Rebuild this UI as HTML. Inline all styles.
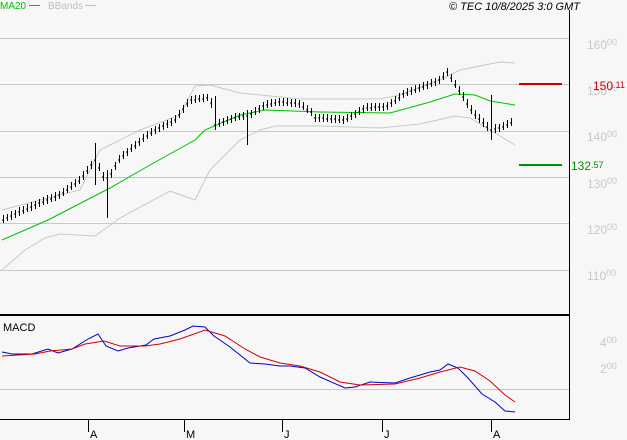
<!DOCTYPE html>
<html><head><meta charset="utf-8"><style>
html,body{margin:0;padding:0;background:#f7f7f7;}
body{width:627px;height:440px;overflow:hidden;position:relative;font-family:"Liberation Sans",sans-serif;}
svg{position:absolute;left:0;top:0;}
</style></head><body>
<svg width="627" height="440" xmlns="http://www.w3.org/2000/svg" font-family="Liberation Sans, sans-serif">
<g stroke="#c8c8c8" stroke-width="1">
<line x1="0" y1="38.5" x2="569" y2="38.5"/>
<line x1="0" y1="84.5" x2="569" y2="84.5"/>
<line x1="0" y1="131.5" x2="569" y2="131.5"/>
<line x1="0" y1="177.5" x2="569" y2="177.5"/>
<line x1="0" y1="223.5" x2="569" y2="223.5"/>
<line x1="0" y1="270.5" x2="569" y2="270.5"/>
<line x1="0" y1="389.5" x2="569" y2="389.5"/>
</g>
<g fill="#c8c8c8" font-size="12">
<text x="587" y="49">160<tspan font-size="9" dy="-4">00</tspan></text>
<text x="587" y="95">150<tspan font-size="9" dy="-4">00</tspan></text>
<text x="587" y="141">140<tspan font-size="9" dy="-4">00</tspan></text>
<text x="587" y="188">130<tspan font-size="9" dy="-4">00</tspan></text>
<text x="587" y="234">120<tspan font-size="9" dy="-4">00</tspan></text>
<text x="587" y="280">110<tspan font-size="9" dy="-4">00</tspan></text>
<text x="600" y="347">4<tspan font-size="9" dy="-4">00</tspan></text>
<text x="600" y="373">2<tspan font-size="9" dy="-4">00</tspan></text>
</g>
<polyline fill="none" stroke="#c8c8c8" points="2,210 40,200 80,190 100,150 140,130 180,115 195,86 210,85 240,93 300,99 380,99 400,95 440,80 460,70 500,62 515,63"/>
<polyline fill="none" stroke="#c8c8c8" points="2,270 25,250 45,238 60,234 95,236 120,218 170,191 195,200 210,170 240,140 260,130 275,126 320,126 380,128 420,124 455,116 470,118 490,130 515,145"/>
<polyline fill="none" stroke="#00c000" points="2,240 48,220 110,188 150,165 195,140 205,130 240,115 265,110 320,112 390,113 430,102 455,94 475,95 490,101 515,105"/>
<polyline fill="none" stroke="#0000d0" points="2,352 12,354 32,354 48,349 58,353 72,349 88,339 98,334 106,346 118,351 128,348 146,345 154,339 170,336 185,330 193,326 205,327 214,336 230,347 250,363 265,364 280,366 290,366 305,368 320,377 345,388 355,387 370,382 395,383 410,378 430,372 440,370 448,364 458,368 468,378 482,394 495,402 505,411 515,412"/>
<polyline fill="none" stroke="#d00000" points="2,356 35,354 50,351 72,349 85,344 104,341 120,346 145,346 160,344 180,339 205,330 225,336 245,349 260,357 280,363 300,366 320,372 340,382 360,385 395,384 420,378 440,372 460,367 475,371 490,381 505,395 515,402"/>
<path stroke="#000" fill="none" d="
M3.5 215V223 M7.5 214V221 M11.5 211V220 M15.5 210V218 M19.5 207V216 M23.5 206V214 M27.5 204V212 M31.5 202V211 M35.5 201V209 M39.5 199V207
M43.5 197V205 M47.5 195V204 M51.5 194V202 M55.5 192V201 M59.5 191V199 M63.5 188V196 M67.5 185V193 M71.5 182V190 M75.5 179V187 M79.5 176V184
M83.5 171V180 M87.5 166V174 M91.5 161V169 M95.5 143V185 M99.5 163V171 M103.5 172V181 M107.5 170V218 M111.5 169V178 M115.5 162V170 M119.5 155V163
M123.5 151V159 M127.5 148V156 M131.5 144V152 M135.5 141V149 M139.5 138V146 M143.5 134V142 M147.5 131V139 M151.5 128V136 M155.5 126V134 M159.5 124V132
M163.5 122V130 M167.5 120V128 M171.5 118V126 M175.5 115V123 M179.5 110V118 M183.5 105V113 M187.5 99V107 M191.5 96V104 M195.5 95V103 M199.5 95V102
M203.5 94V102 M207.5 94V101 M211.5 98V108 M215.5 96V130 M219.5 119V127 M223.5 118V126 M227.5 116V124 M231.5 115V123 M235.5 113V121 M239.5 113V120
M243.5 112V120 M247.5 110V145 M251.5 110V118 M255.5 107V115 M259.5 105V113 M263.5 102V110 M267.5 100V108 M271.5 99V107 M275.5 99V106 M279.5 98V106
M283.5 98V106 M287.5 98V106 M291.5 99V107 M295.5 99V107 M299.5 100V108 M303.5 102V110 M307.5 105V113 M311.5 108V116 M315.5 114V122 M319.5 114V122
M323.5 114V122 M327.5 114V122 M331.5 115V123 M335.5 115V123 M339.5 115V123 M343.5 116V124 M347.5 114V122 M351.5 112V120 M355.5 110V118 M359.5 107V115
M363.5 105V113 M367.5 103V111 M371.5 103V111 M375.5 103V111 M379.5 103V111 M383.5 103V111 M387.5 102V110 M391.5 99V107 M395.5 96V104 M399.5 93V101
M403.5 90V98 M407.5 88V96 M411.5 87V95 M415.5 85V93 M419.5 84V92 M423.5 82V90 M427.5 81V89 M431.5 79V87 M435.5 78V86 M439.5 76V84
M443.5 72V80 M447.5 68V76 M451.5 74V82 M455.5 80V88 M459.5 86V95 M463.5 92V101 M467.5 99V108 M471.5 105V114 M475.5 110V119 M479.5 114V123
M483.5 118V127 M487.5 122V131 M491.5 95V140 M495.5 124V133 M499.5 124V132 M503.5 122V130 M507.5 120V128 M511.5 118V126"/>
<path stroke="#000" fill="none" d="
M2 220h1.5 M6 218h1.5 M10 216h1.5 M14 214h1.5 M18 212h1.5 M22 211h1.5 M26 209h1.5 M30 207h1.5 M34 205h1.5 M38 203h1.5 M42 202h1.5 M46 200h1.5 M50 199h1.5 M54 197h1.5 M58 195h1.5 M62 193h1.5 M66 190h1.5 M70 187h1.5 M74 184h1.5 M78 181h1.5
M82 176h1.5 M86 171h1.5 M90 165h1.5 M94 160h1.5 M98 168h1.5 M102 177h1.5 M106 178h1.5 M110 174h1.5 M114 166h1.5 M118 160h1.5 M122 156h1.5 M126 152h1.5 M130 149h1.5 M134 146h1.5 M138 142h1.5 M142 139h1.5 M146 136h1.5 M150 133h1.5 M154 130h1.5 M158 128h1.5
M162 126h1.5 M166 124h1.5 M170 122h1.5 M174 120h1.5 M178 115h1.5 M182 109h1.5 M186 104h1.5 M190 100h1.5 M194 100h1.5 M198 99h1.5 M202 99h1.5 M206 98h1.5 M210 103h1.5 M214 125h1.5 M218 124h1.5 M222 122h1.5 M226 121h1.5 M230 119h1.5 M234 118h1.5 M238 117h1.5
M242 116h1.5 M246 116h1.5 M250 114h1.5 M254 112h1.5 M258 109h1.5 M262 106h1.5 M266 105h1.5 M270 104h1.5 M274 103h1.5 M278 102h1.5 M282 102h1.5 M286 103h1.5 M290 103h1.5 M294 103h1.5 M298 104h1.5 M302 107h1.5 M306 110h1.5 M310 112h1.5 M314 118h1.5 M318 118h1.5
M322 118h1.5 M326 119h1.5 M330 119h1.5 M334 119h1.5 M338 120h1.5 M342 120h1.5 M346 119h1.5 M350 116h1.5 M354 114h1.5 M358 112h1.5 M362 109h1.5 M366 108h1.5 M370 108h1.5 M374 107h1.5 M378 107h1.5 M382 107h1.5 M386 106h1.5 M390 103h1.5 M394 101h1.5 M398 98h1.5
M402 94h1.5 M406 93h1.5 M410 91h1.5 M414 90h1.5 M418 88h1.5 M422 87h1.5 M426 85h1.5 M430 84h1.5 M434 82h1.5 M438 80h1.5 M442 77h1.5 M446 72h1.5 M450 78h1.5 M454 85h1.5 M458 91h1.5 M462 97h1.5 M466 104h1.5 M470 110h1.5 M474 115h1.5 M478 119h1.5
M482 123h1.5 M486 127h1.5 M490 130h1.5 M494 129h1.5 M498 128h1.5 M502 127h1.5 M506 125h1.5 M510 123h1.5"/>
<line x1="519" y1="84" x2="562" y2="84" stroke="#d00000" stroke-width="2"/>
<line x1="519" y1="165" x2="562" y2="165" stroke="#009000" stroke-width="2"/>
<text x="593" y="90" fill="#d00000" font-size="12">150<tspan font-size="9" dy="-2">.11</tspan></text>
<text x="571" y="170" fill="#009000" font-size="12">132<tspan font-size="9" dy="-2">.57</tspan></text>
<line x1="569.5" y1="10" x2="569.5" y2="420" stroke="#000"/>
<line x1="0" y1="315" x2="569" y2="315" stroke="#000" stroke-width="2"/>
<line x1="0" y1="419.5" x2="569" y2="419.5" stroke="#000"/>
<g stroke="#000">
<line x1="88.5" y1="420" x2="88.5" y2="432"/>
<line x1="184.5" y1="420" x2="184.5" y2="432"/>
<line x1="282.5" y1="420" x2="282.5" y2="432"/>
<line x1="382.5" y1="420" x2="382.5" y2="432"/>
<line x1="491.5" y1="420" x2="491.5" y2="432"/>
</g>
<g font-size="11" fill="#000">
<text x="90" y="438">A</text><text x="186" y="438">M</text><text x="284" y="438">J</text><text x="384" y="438">J</text><text x="493" y="438">A</text>
<text x="3" y="331">MACD</text>
</g>
<text x="0" y="9" font-size="10" fill="#00c000">MA20</text>
<line x1="29" y1="5.5" x2="40" y2="5.5" stroke="#00c000"/>
<text x="48" y="9" font-size="10" fill="#c0c0c0">BBands</text>
<line x1="85" y1="5.5" x2="96" y2="5.5" stroke="#c0c0c0"/>
<text x="449" y="10" font-size="11" font-style="italic" fill="#000">© TEC 10/8/2025 3:0 GMT</text>
</svg>
</body></html>
